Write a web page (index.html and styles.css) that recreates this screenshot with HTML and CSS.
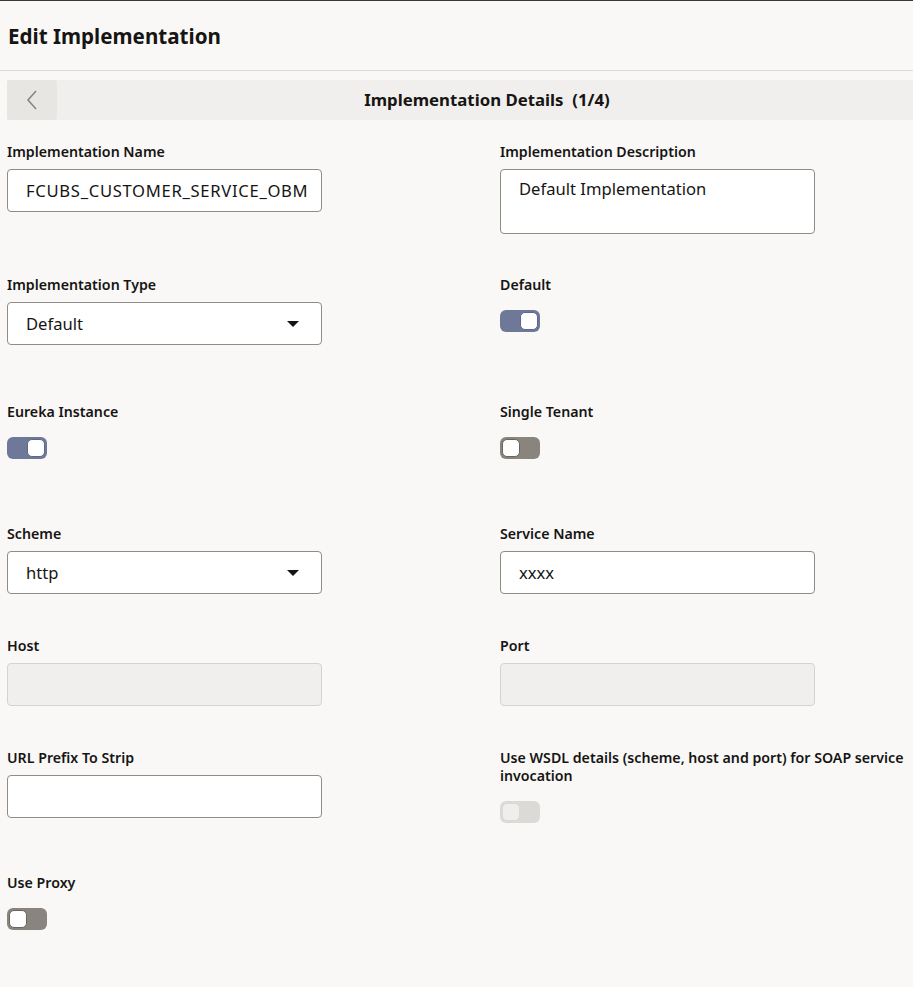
FILE: index.html
```html
<!DOCTYPE html>
<html lang="en">
<head>
    <meta charset="UTF-8">
    <meta name="viewport" content="width=device-width, initial-scale=1.0">
    <title>Edit Implementation</title>
    <link rel="stylesheet" href="styles.css">
</head>
<body>
    <div class="page">
        <div class="page-header">
            <h1 class="page-title">Edit Implementation</h1>
        </div>

        <div class="train">
            <button class="train-back" aria-label="Previous">
                <svg width="14" height="22" viewBox="0 0 14 22">
                    <path d="M11 2 L3 11 L11 20" fill="none" stroke="#8a8580" stroke-width="1.6"/>
                </svg>
            </button>
            <div class="train-title">Implementation Details&nbsp; (1/4)</div>
        </div>

        <div class="form">
            <div class="field">
                <label class="field-label">Implementation Name</label>
                <div class="input"><span class="input-text caps">FCUBS_CUSTOMER_SERVICE_OBMA</span></div>
            </div>
            <div class="field">
                <label class="field-label">Implementation Description</label>
                <div class="input textarea"><span class="input-text">Default Implementation</span></div>
            </div>

            <div class="field">
                <label class="field-label">Implementation Type</label>
                <div class="input select"><span class="input-text">Default</span><span class="caret"></span></div>
            </div>
            <div class="field">
                <label class="field-label">Default</label>
                <div class="switch on"><span class="knob"></span></div>
            </div>

            <div class="field">
                <label class="field-label">Eureka Instance</label>
                <div class="switch on"><span class="knob"></span></div>
            </div>
            <div class="field">
                <label class="field-label">Single Tenant</label>
                <div class="switch"><span class="knob"></span></div>
            </div>

            <div class="field">
                <label class="field-label">Scheme</label>
                <div class="input select"><span class="input-text">http</span><span class="caret"></span></div>
            </div>
            <div class="field">
                <label class="field-label">Service Name</label>
                <div class="input"><span class="input-text">xxxx</span></div>
            </div>

            <div class="field">
                <label class="field-label">Host</label>
                <div class="input disabled"></div>
            </div>
            <div class="field">
                <label class="field-label">Port</label>
                <div class="input disabled"></div>
            </div>

            <div class="field">
                <label class="field-label">URL Prefix To Strip</label>
                <div class="input"></div>
            </div>
            <div class="field">
                <label class="field-label wide">Use WSDL details (scheme, host and port) for SOAP service invocation</label>
                <div class="switch disabled"><span class="knob"></span></div>
            </div>

            <div class="field">
                <label class="field-label">Use Proxy</label>
                <div class="switch"><span class="knob"></span></div>
            </div>
        </div>
    </div>
</body>
</html>
```

FILE: styles.css
```css
html, body {
    margin: 0;
    padding: 0;
    overflow: hidden;
}

body {
    background-color: #f9f8f6;
    color: #161513;
    font-family: "Noto Sans", "Open Sans", Arial, sans-serif;
    border-top: 1px solid #3a3836;
}

.page {
    width: 960px;
}

.page-header {
    height: 69px;
    border-bottom: 1px solid #dedcd9;
    display: flex;
    align-items: center;
    padding-left: 8px;
}

.page-title {
    margin: 0;
    font-size: 20.6px;
    font-weight: 700;
}

.train {
    margin: 9px 0 0 7px;
    height: 40px;
    display: flex;
    align-items: center;
    background-color: #f1efed;
}

.train-back {
    width: 50px;
    height: 40px;
    border: none;
    border-radius: 3px;
    background-color: #e8e6e3;
    display: flex;
    align-items: center;
    justify-content: center;
    padding: 0;
}

.train-title {
    flex: 1;
    text-align: center;
    font-size: 16.8px;
    font-weight: 700;
    padding-right: 43px;
    margin-top: -1px;
}

.form {
    display: grid;
    grid-template-columns: 493px 460px;
    grid-template-rows: 133px 127px 122px 112px 112px 125px auto;
    margin: 23px 0 0 7px;
}

.field {
    display: flex;
    flex-direction: column;
    align-items: flex-start;
}

.field-label {
    font-size: 14.2px;
    font-weight: 600;
    line-height: 18px;
    margin-bottom: 8px;
}

.field-label.wide {
    width: 420px;
}

.input {
    box-sizing: border-box;
    width: 315px;
    height: 43px;
    border: 1px solid #8f8b86;
    border-radius: 4px;
    background-color: #fff;
    padding: 0 14px 0 18px;
    font-size: 16.6px;
    line-height: 41px;
    position: relative;
}

.input-text {
    display: block;
    white-space: nowrap;
    overflow: hidden;
}

.input-text.caps {
    letter-spacing: 0.7px;
}

.input.textarea {
    height: 65px;
    line-height: 38px;
}

.input.disabled {
    background-color: #f1efed;
    border-color: #d6d3cf;
}

.input.select .caret {
    position: absolute;
    right: 22px;
    top: 18px;
    width: 0;
    height: 0;
    border-left: 6px solid transparent;
    border-right: 6px solid transparent;
    border-top: 6px solid #161513;
}

.switch {
    box-sizing: border-box;
    width: 40px;
    height: 22px;
    margin-top: 8px;
    border-radius: 6px;
    background-color: #8a847e;
    padding: 2px;
    display: flex;
}

.switch .knob {
    box-sizing: border-box;
    width: 18px;
    height: 18px;
    border-radius: 5px;
    background-color: #fff;
    border: 1px solid #6b6560;
}

.switch.on {
    background-color: #6e7898;
    justify-content: flex-end;
}

.switch.on .knob {
    border-color: #5d6786;
}

.switch.disabled {
    background-color: #dcdad7;
}

.switch.disabled .knob {
    background-color: #efeeec;
    border-color: #dcdad7;
}
```
